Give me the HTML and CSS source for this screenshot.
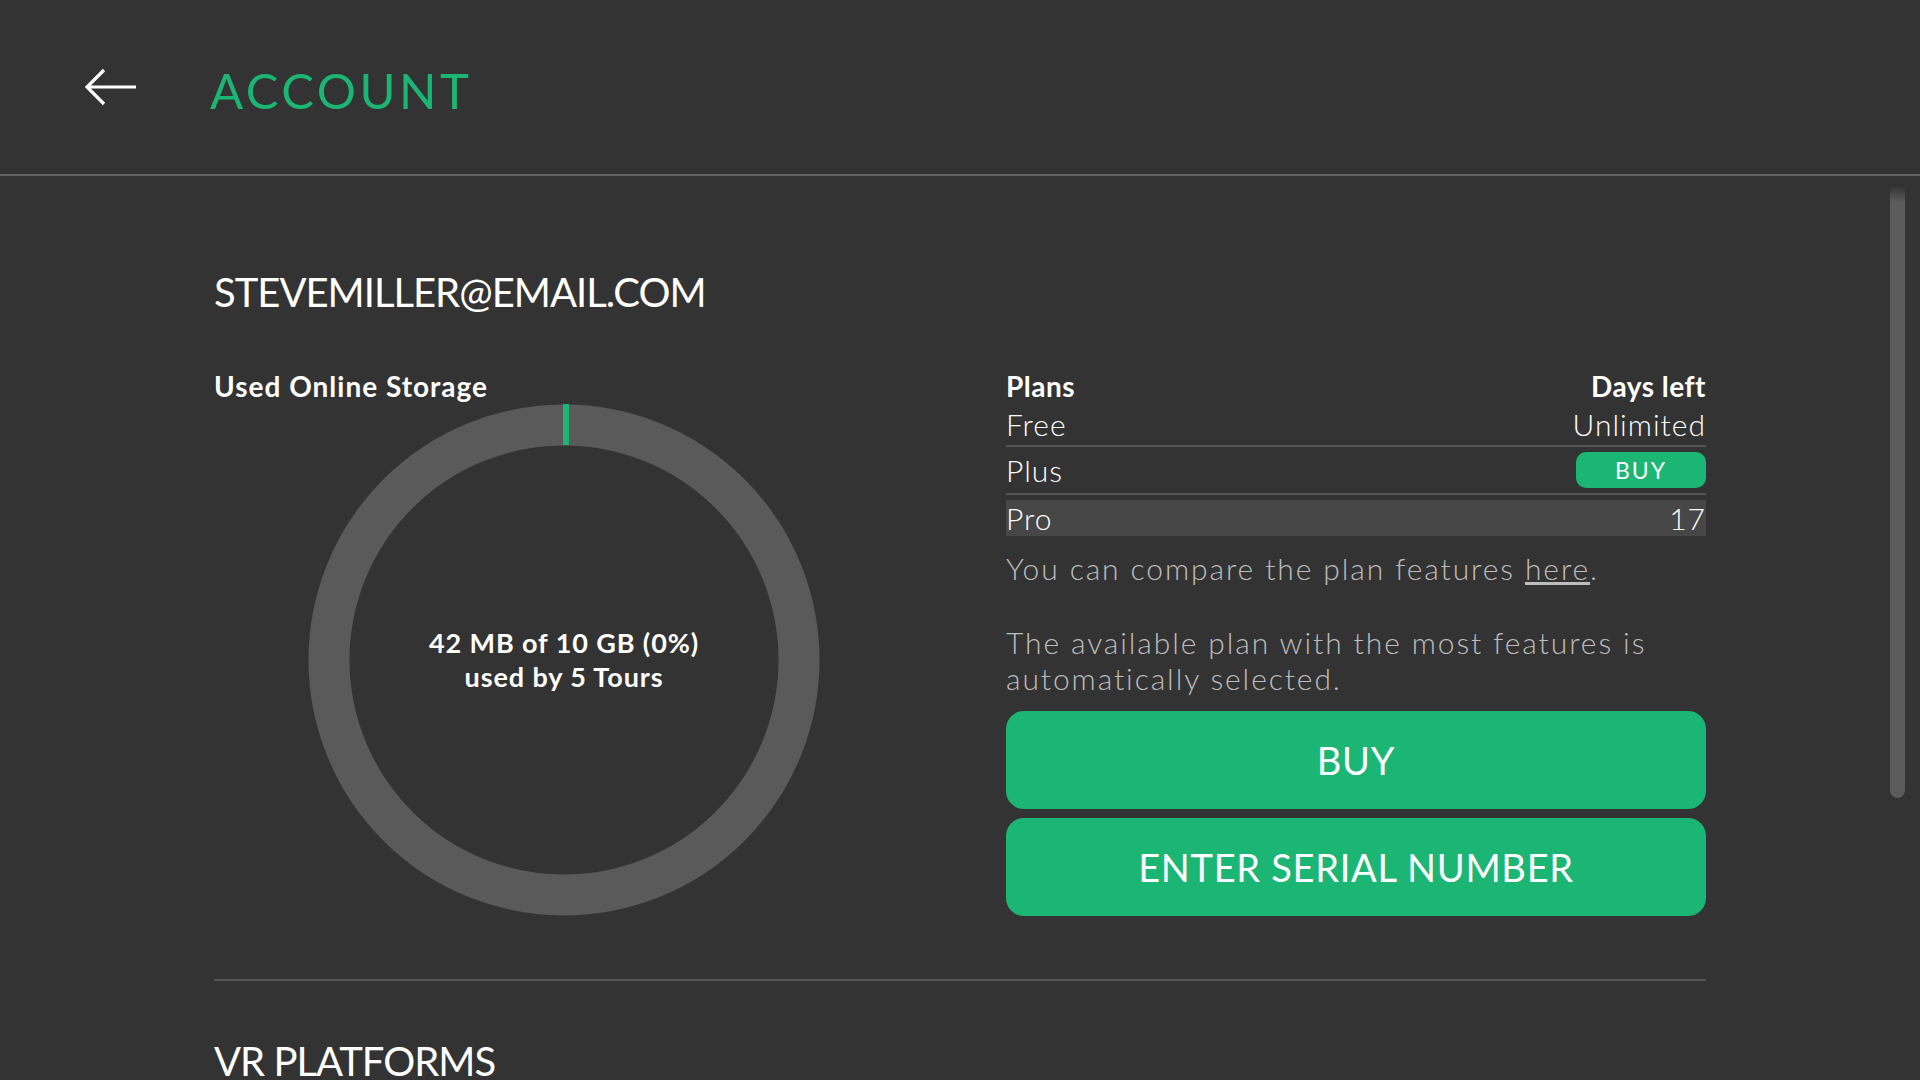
FILE: index.html
```html
<!DOCTYPE html>
<html lang="en">
<head>
    <meta charset="utf-8">
    <title>Account</title>
    <link rel="stylesheet" href="styles.css">
</head>
<body>
<header class="topbar">
    <a class="back" href="#" aria-label="Back">
        <svg viewBox="0 0 52 38" width="52" height="38">
            <path d="M51 19H3M19 2L2 19l17 17" fill="none" stroke="#fff" stroke-width="3.2"/>
        </svg>
    </a>
    <h1 class="title">ACCOUNT</h1>
</header>

<main class="content">
    <section class="account">
        <h2 class="heading">STEVEMILLER@EMAIL.COM</h2>

        <div class="account-grid">
            <div class="storage">
                <h3 class="label">Used Online Storage</h3>
                <div class="donut">
                    <svg viewBox="0 0 512 512" width="512" height="512">
                        <circle cx="256" cy="256" r="235" fill="none" stroke="#5a5a5a" stroke-width="41"/>
                        <rect x="255" y="0" width="6" height="41" fill="#1bb673"/>
                    </svg>
                    <p class="donut-text">42 MB of 10 GB (0%)<br>used by 5 Tours</p>
                </div>
            </div>

            <div class="plans">
                <div class="plan-head">
                    <span>Plans</span>
                    <span>Days left</span>
                </div>
                <div class="plan-row">
                    <span>Free</span>
                    <span>Unlimited</span>
                </div>
                <div class="plan-row plan-row-buy">
                    <span>Plus</span>
                    <button class="small-btn" type="button">BUY</button>
                </div>
                <div class="plan-row plan-row-active">
                    <span>Pro</span>
                    <span>17</span>
                </div>

                <p class="note">You can compare the plan features <a href="#">here</a>.</p>
                <p class="note note-gap">The available plan with the most features is automatically selected.</p>

                <button class="big-btn first" type="button">BUY</button>
                <button class="big-btn" type="button">ENTER SERIAL NUMBER</button>
            </div>
        </div>
    </section>

    <hr class="divider">

    <section class="platforms">
        <h2 class="heading">VR PLATFORMS</h2>
    </section>
</main>

<div class="scroll-thumb"></div>
</body>
</html>
```

FILE: styles.css
```css
/* Base */
html, body {
    margin: 0;
    height: 100%;
}
body {
    background: #333333;
    color: #ffffff;
    font-family: "Lato", "Open Sans", sans-serif;
    overflow: hidden;
    position: relative;
}
h1, h2, h3, p {
    margin: 0;
    font-weight: normal;
}

/* Header */
.topbar {
    display: flex;
    align-items: center;
    height: 174px;
    padding-left: 85px;
    border-bottom: 2px solid #626262;
}
.back {
    display: block;
    width: 52px;
    height: 38px;
}
.back svg {
    display: block;
}
.title {
    margin: 6px 0 0 73px;
    color: #1bb673;
    font-size: 49px;
    line-height: 58px;
    letter-spacing: 3.5px;
}

/* Content */
.content {
    width: 1492px;
    margin: 0 auto;
    padding-top: 92px;
}
.heading {
    font-size: 40px;
    line-height: 48px;
    letter-spacing: -1px;
}
.account-grid {
    display: grid;
    grid-template-columns: 700px 700px;
    column-gap: 92px;
    margin-top: 53px;
}

/* Storage donut */
.label {
    font-size: 28px;
    font-weight: bold;
    line-height: 34px;
    letter-spacing: 1px;
}
.donut {
    display: grid;
    place-items: center;
    width: 512px;
    height: 512px;
    margin: 1px auto 0;
}
.donut svg, .donut-text {
    grid-area: 1 / 1;
}
.donut svg {
    display: block;
}
.donut-text {
    font-size: 27px;
    font-weight: bold;
    line-height: 34px;
    letter-spacing: 0.9px;
    text-align: center;
}

/* Plans table */
.plan-head, .plan-row {
    display: flex;
    justify-content: space-between;
    align-items: center;
}
.plan-head {
    height: 34px;
    font-size: 28px;
    font-weight: bold;
    letter-spacing: 0.5px;
}
.plan-row {
    height: 42px;
    font-size: 30px;
    line-height: 36px;
    font-weight: 300;
    letter-spacing: 1px;
    border-bottom: 2px solid #555555;
}
.plan-row-buy {
    height: 46px;
}
.plan-row-active {
    height: 36px;
    margin-top: 5px;
    background: #474747;
    border-bottom: none;
}
.small-btn {
    width: 130px;
    height: 36px;
    border: none;
    border-radius: 10px;
    background: #1bb673;
    color: #ffffff;
    font-family: inherit;
    font-size: 23px;
    letter-spacing: 2px;
    cursor: pointer;
}
.note {
    margin-top: 14px;
    color: #bdbdbd;
    font-size: 30px;
    line-height: 36px;
    font-weight: 300;
    letter-spacing: 1.9px;
}
.note a {
    color: inherit;
}
.note-gap {
    margin-top: 38px;
}
.big-btn {
    display: block;
    width: 100%;
    height: 98px;
    margin-top: 9px;
    border: none;
    border-radius: 18px;
    background: #1bb673;
    color: #ffffff;
    font-family: inherit;
    font-size: 38px;
    letter-spacing: 0.7px;
    cursor: pointer;
}
.big-btn.first {
    margin-top: 15px;
}

/* Divider and next section */
.divider {
    margin: 63px 0 0;
    border: none;
    border-top: 2px solid #555555;
}
.platforms {
    padding-top: 56px;
}

/* Scrollbar drawn over the page */
.scroll-thumb {
    position: absolute;
    top: 186px;
    left: 1890px;
    width: 15px;
    height: 612px;
    border-radius: 8px;
    background: linear-gradient(#333333, #5c5c5c 16px);
}
```
